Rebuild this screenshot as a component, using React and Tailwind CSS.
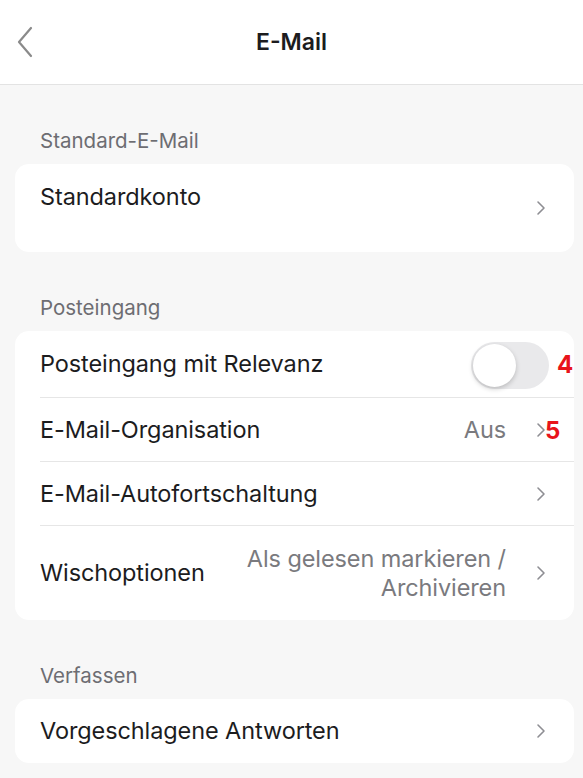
const font = { fontFamily: "Inter, 'Noto Sans', sans-serif" };

function Chevron() {
  return (
    <svg width="12" height="18" viewBox="0 0 12 18" className="shrink-0">
      <path d="M3 3l6 6-6 6" fill="none" stroke="#8e8e93" strokeWidth="1.6" strokeLinecap="round" strokeLinejoin="round" />
    </svg>
  );
}

function Label({ children }) {
  return (
    <div className="pt-[44px] pb-[11px] pl-[40px] text-[20.5px] leading-[24px] text-[#6d6d72]">{children}</div>
  );
}

function Row({ title, right, extra, last, h = "h-[64px]" }) {
  return (
    <div className={`flex items-center pl-[25px] ${h}`}>
      <div className={`flex items-center flex-1 h-full pr-[27px] ${last ? "" : "border-b border-[#e6e6e6]"}`}>
        <span className="flex-1 text-[23.5px] tracking-[-0.1px] text-[#1c1c1e]">{title}</span>
        {right}
        <div className="relative flex items-center">
          <Chevron />
          {extra}
        </div>
      </div>
    </div>
  );
}

export default function App() {
  return (
    <div className="w-[583px] h-[778px] bg-[#f7f7f7] overflow-hidden" style={font}>
      <div className="relative h-[85px] bg-white border-b border-[#e3e3e3] flex items-center justify-center">
        <svg width="20" height="34" viewBox="0 0 20 34" className="absolute left-[15px] top-[25px]">
          <path d="M16 3L4 17l12 14" fill="none" stroke="#8a8a8a" strokeWidth="2.2" strokeLinecap="round" strokeLinejoin="round" />
        </svg>
        <span className="text-[23px] font-semibold text-[#1c1c1e]">E-Mail</span>
      </div>

      <Label>Standard-E-Mail</Label>
      <div className="ml-[15px] mr-[9px] bg-white rounded-[14px] h-[88px] flex items-start pl-[25px] pr-[27px]">
        <span className="flex-1 pt-[19px] text-[23.5px] tracking-[-0.1px] leading-[28px] text-[#1c1c1e]">Standardkonto</span>
        <div className="self-center"><Chevron /></div>
      </div>

      <Label>Posteingang</Label>
      <div className="ml-[15px] mr-[9px] bg-white rounded-[14px]">
        <div className="flex items-center pl-[25px] h-[67px]">
          <div className="flex items-center flex-1 h-full border-b border-[#e6e6e6] pr-[25px]">
            <span className="flex-1 text-[23.5px] tracking-[-0.1px] text-[#1c1c1e]">Posteingang mit Relevanz</span>
            <div className="relative w-[78px] h-[47px] rounded-full bg-[#e9e9eb] mt-[3px]">
              <div className="absolute left-[2px] top-[2px] w-[43px] h-[43px] rounded-full bg-white shadow-[0_2px_5px_rgba(0,0,0,0.2)]" />
              <span className="absolute left-[86px] top-[5px] text-[24px] font-bold text-[#e8141b]">4</span>
            </div>
          </div>
        </div>
        <Row
          title="E-Mail-Organisation"
          right={<span className="text-[23.5px] tracking-[-0.1px] text-[#7a7a7e] mr-[29px]">Aus</span>}
          extra={<span className="absolute left-[10px] -top-[8px] text-[24px] font-bold text-[#e8141b]">5</span>}
        />
        <Row title="E-Mail-Autofortschaltung" />
        <Row
          title="Wischoptionen"
          h="h-[94px]"
          last
          right={
            <span className="text-[23.5px] tracking-[-0.1px] leading-[29px] text-[#7a7a7e] text-right mr-[29px]">
              Als gelesen markieren /<br />Archivieren
            </span>
          }
        />
      </div>

      <Label>Verfassen</Label>
      <div className="ml-[15px] mr-[9px] bg-white rounded-[14px]">
        <Row title="Vorgeschlagene Antworten" last />
      </div>
    </div>
  );
}
